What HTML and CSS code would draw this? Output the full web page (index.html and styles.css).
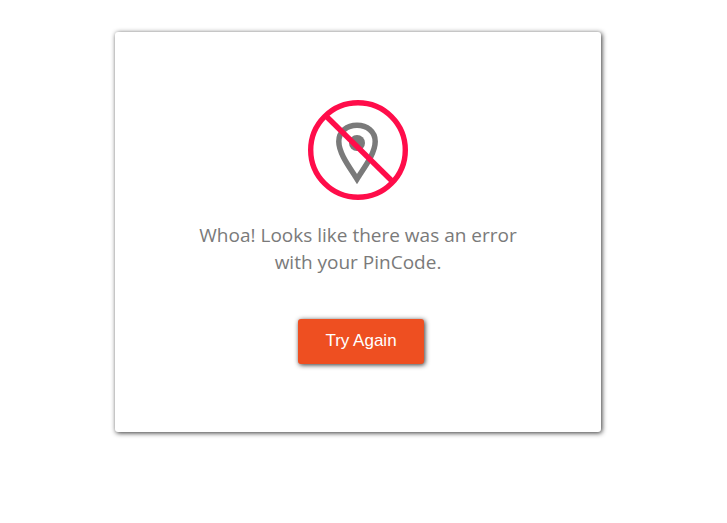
FILE: index.html
```html
<!DOCTYPE html>
<html lang="en">
<head>
<meta charset="utf-8">
<meta name="viewport" content="width=device-width, initial-scale=1">
<title>PinCode error</title>
<link rel="stylesheet" href="styles.css">
</head>
<body>
<main class="card">
  <svg class="icon" viewBox="0 0 100 100" aria-hidden="true">
    <path d="M49 79C43 69 30.800 54 30.800 41.500C30.800 31.500 39 25.300 49 25.300S67.200 31.500 67.200 41.500C67.200 54 55 69 49 79Z" fill="none" stroke="#7a7a7a" stroke-width="5.500"/>
    <circle cx="49" cy="43" r="8" fill="#7a7a7a"/>
    <circle cx="50" cy="50" r="47.300" fill="none" stroke="#ff0d4a" stroke-width="5.400"/>
    <path d="M17.500 15.500L85 82" stroke="#ff0d4a" stroke-width="5.400"/>
  </svg>
  <p class="message">Whoa! Looks like there was an error with your PinCode.</p>
  <button class="retry" type="button">Try Again</button>
</main>
</body>
</html>
```
FILE: styles.css
```css
* {
  box-sizing: border-box;
}

body {
  margin: 0;
  padding: 32px 11px 32px 0;
  background: #fff;
}

.card {
  display: flex;
  flex-direction: column;
  align-items: center;
  width: 68%;
  margin: 0 auto;
  padding: 68px 80px;
  border-radius: 3px;
  background: #fff;
  box-shadow: 1px 1px 5px #333;
}

.icon {
  width: 100px;
  height: 100px;
}

.message {
  max-width: 324px;
  margin: 22px 0 43px;
  color: #7a7a7a;
  font: 19px/27px "Segoe UI", "Open Sans", sans-serif;
  text-align: center;
}

.retry {
  margin-left: 6px;
  padding: 12px 27px 14px;
  border: 0;
  border-radius: 3px;
  background: #ee4f21;
  box-shadow: 1px 1px 5px #333;
  color: #fff;
  font: 17px/19px "Liberation Sans", Arial, sans-serif;
  cursor: pointer;
}
```
